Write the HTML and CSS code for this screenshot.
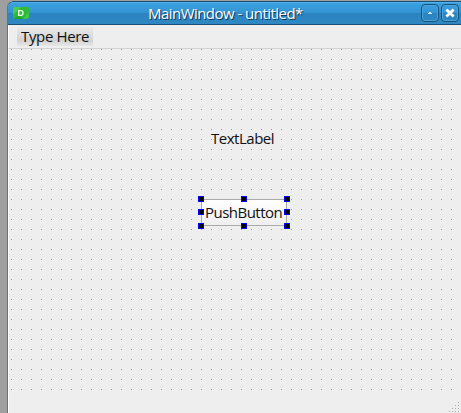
FILE: index.html
```
<!DOCTYPE html>
<html lang="en">
<head>
<meta charset="utf-8">
<title>MainWindow - untitled*</title>
<link rel="stylesheet" href="styles.css">
</head>
<body>
<main class="window">
  <header class="titlebar">
    <svg class="app-icon" width="16" height="12" viewBox="0 0 16 12" aria-hidden="true">
      <path fill="#2fb83a" d="M0 1l1-1h15v10l-2 2H0z"/>
      <path fill="#4bcb50" d="M1 0h7L0 8V1z"/>
      <path fill="#43c84a" d="M16 5v5l-2 2h-4z"/>
      <path fill="#1fa531" d="M0 12l5-3 6 3z"/>
      <path fill="none" stroke="#e4ffe2" stroke-width="1.4" d="M5.7 3.6h3l1.2 1.2v2.5L8.7 8.4h-3z"/>
    </svg>
    <h1 class="title">MainWindow - untitled*</h1>
    <div class="controls">
      <button class="control" aria-label="Minimize"><svg width="16" height="16"><path fill="#c9e9fa" d="M6 8h4v1H6zM7 7h2v1H7z"/></svg></button>
      <button class="control" aria-label="Close"><svg width="16" height="16"><path stroke="#fff" stroke-width="2.8" d="M4.4 4.4l7.2 7.2M11.6 4.4l-7.2 7.2"/></svg></button>
    </div>
  </header>
  <nav class="menubar"><span class="menu-item"><span class="menu-text">Type Here</span></span></nav>
  <section class="canvas">
    <span class="text-label">TextLabel</span>
    <div class="push-button">
      <span class="push-text">PushButton</span>
      <i class="handle top left"></i><i class="handle top center"></i><i class="handle top right"></i>
      <i class="handle middle left"></i><i class="handle middle right"></i>
      <i class="handle bottom left"></i><i class="handle bottom center"></i><i class="handle bottom right"></i>
    </div>
  </section>
  <footer class="statusbar">
    <svg width="10" height="10" viewBox="0 0 10 10"><path fill="#aaa" d="M9 0h1v1H9zM6 3h1v1H6zM9 3h1v1H9zM3 6h1v1H3zM6 6h1v1H6zM9 6h1v1H9zM0 9h1v1H0zM3 9h1v1H3zM6 9h1v1H6zM9 9h1v1H9z"/></svg>
  </footer>
</main>
</body>
</html>
```
FILE: styles.css
```
* { box-sizing: border-box; }
body {
  margin: 0;
  height: 413px;
  padding: 1px 0 0 7px;
  overflow: hidden;
  background: #9f9f9f;
  font: 15px/20px "Open Sans", sans-serif;
  color: #111;
}
.window {
  height: 412px;
  display: flex;
  flex-direction: column;
  border-left: 1px solid #707070;
  border-radius: 6px 0 0 0;
  background: #eee;
  overflow: hidden;
}
.titlebar {
  height: 24px;
  flex: none;
  display: flex;
  align-items: center;
  margin-left: -1px;
  padding: 0 2px 0 5px;
  border: 1px solid #184f78;
  border-right: 0;
  border-radius: 6px 0 0 0;
  background: linear-gradient(#3ba2e2 0, #3494d2 49%, #2b84bf 50%, #3088c3 100%);
  box-shadow: inset 0 1px #55aee4;
}
.app-icon { display: block; flex: none; }
.title {
  flex: 1;
  margin: 0 0 0 119px;
  font-size: 15px;
  font-weight: 400;
  letter-spacing: -0.54px;
  line-height: 20px;
  white-space: pre;
  color: #fff;
  text-shadow: 1px 1px 0 #0c3656;
}
.controls { display: flex; gap: 2px; }
.control {
  width: 18px;
  height: 18px;
  padding: 0;
  border: 1px solid #17527c;
  border-radius: 4px;
  background: transparent;
  box-shadow: inset 0 0 0 1px #4ba5dc;
}
.control svg { display: block; }
.menubar {
  height: 24px;
  flex: none;
  padding: 2px 0 0 8px;
  border-left: 1px solid #fff;
  border-bottom: 1px solid #d3d3d3;
}
.menu-item {
  display: block;
  width: 76px;
  height: 19px;
  padding-left: 4px;
  background: linear-gradient(#ebebeb, #d2d2d2 70%, #e7e7e7);
}
.menu-text {
  display: block;
  line-height: 18px;
  letter-spacing: -0.35px;
  white-space: nowrap;
}
.canvas {
  height: 342px;
  flex: none;
  display: flex;
  flex-direction: column;
  align-items: flex-start;
  border-left: 1px solid #fff;
  background: radial-gradient(circle at 0.5px 0.5px, #999 0 0.7px, transparent 0.71px) 2px 0 / 10px 10px;
}
.text-label {
  margin: 79px 0 0 202px;
  letter-spacing: -0.48px;
}
.push-button {
  position: relative;
  display: flex;
  align-items: center;
  width: 86px;
  height: 27px;
  margin: 51px 0 0 192px;
  padding: 0 0 1px 3px;
  border: 1px solid #aaa;
  background: linear-gradient(#fff, #efefef);
}
.push-text { letter-spacing: -0.52px; }
.handle {
  position: absolute;
  width: 6px;
  height: 6px;
  background: #000;
  border: 1px solid #00f;
}
.top { top: -4px; }
.middle { top: 9px; }
.bottom { bottom: -4px; }
.left { left: -4px; }
.center { left: 39px; }
.right { right: -4px; }
.statusbar {
  flex: 1;
  display: flex;
  justify-content: flex-end;
  align-items: flex-end;
  padding: 0 2px 1px 0;
  border-left: 1px solid #fff;
}
.statusbar svg { display: block; }
```
